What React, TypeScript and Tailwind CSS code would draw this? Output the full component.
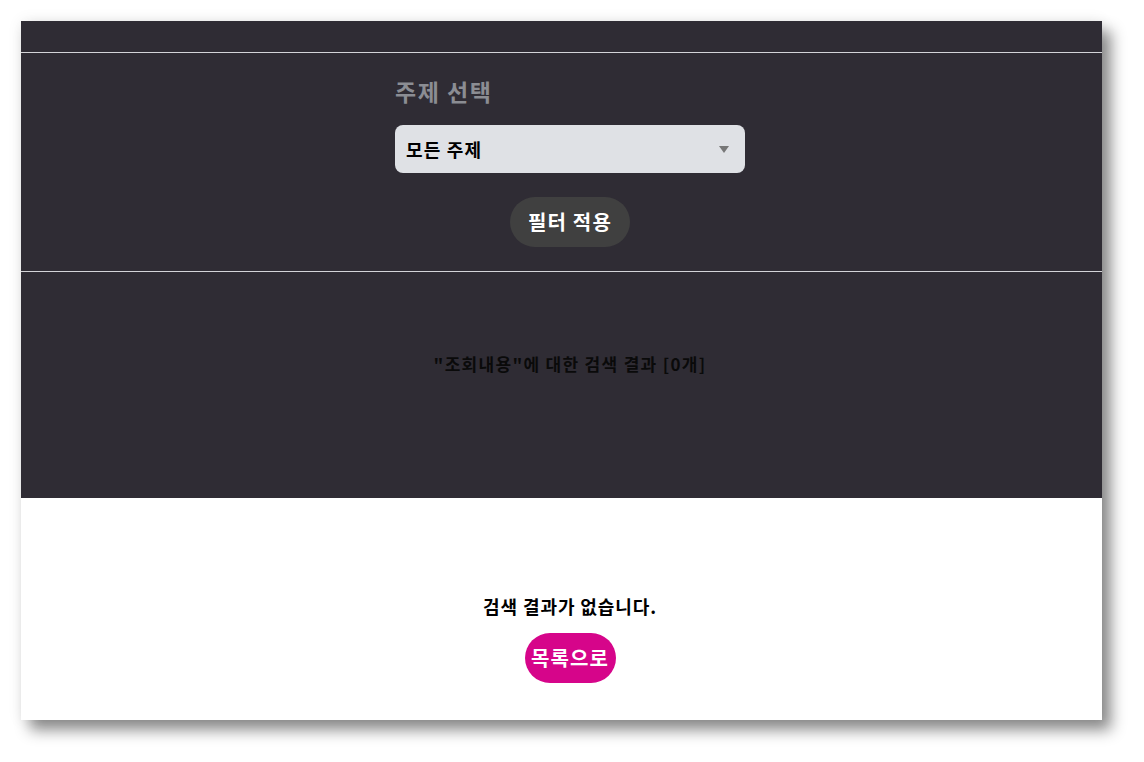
export default function App() {
  return (
    <div className="min-h-[762px] bg-white p-[21px] font-['Noto_Sans_CJK_KR','Noto_Sans',sans-serif]">
      <div className="flex h-[699px] w-[1081px] flex-col shadow-[9px_10px_14px_rgba(0,0,0,0.45),0_0_14px_rgba(0,0,0,0.08)]">
        {/* header bar */}
        <div className="h-[32px] border-b border-[#d4d4d8] bg-[#2f2c34]" />

        {/* filter */}
        <div className="flex h-[219px] flex-col items-center border-b border-[#d4d4d8] bg-[#2f2c34] pl-[17px]">
          <div className="w-[350px]">
            <h3 className="mt-[23px] text-[23px] font-bold leading-[30px] tracking-[1.5px] text-[#8b8d93]">주제 선택</h3>
            <div className="relative mt-[19px] flex h-[48px] items-center rounded-lg bg-[#dfe1e5] px-[11px]">
              <span className="text-[18px] font-bold tracking-[1.2px] text-black">모든 주제</span>
              <span className="absolute right-[16px] top-[21px] h-0 w-0 border-x-[5px] border-t-[7px] border-x-transparent border-t-[#777]" />
            </div>
          </div>
          <button className="mt-[24px] h-[50px] w-[120px] rounded-full bg-[#404040] text-[20px] font-bold tracking-[1.2px] text-white">
            필터 적용
          </button>
        </div>

        {/* result count */}
        <div className="flex h-[226px] items-start justify-center bg-[#2f2c34] pl-[17px] pt-[79px]">
          <p className="text-[17px] font-bold tracking-[1.3px] text-[#0a0a0a]">"조회내용"에 대한 검색 결과 [0개]</p>
        </div>

        {/* empty state */}
        <div className="flex flex-1 flex-col items-center bg-white pl-[17px] pt-[96px]">
          <p className="text-[18px] font-bold leading-[24px] tracking-[0.9px] text-black">검색 결과가 없습니다.</p>
          <button className="mt-[15px] h-[50px] w-[91px] rounded-full bg-[#d6058a] text-[20px] font-bold tracking-[1.1px] text-white">
            목록으로
          </button>
        </div>
      </div>
    </div>
  );
}
